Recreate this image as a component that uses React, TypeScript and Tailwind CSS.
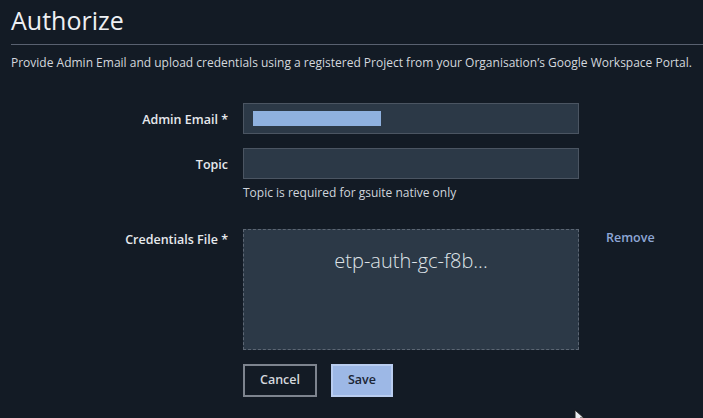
import React from "react"

function Field({ label, children }: { label: string; children: React.ReactNode }) {
  return (
    <div className="grid grid-cols-[228px_336px] gap-x-[15px]">
      <div className="pt-[8px] text-right text-[12.5px] font-semibold text-[#e6e9ed]">{label}</div>
      <div>{children}</div>
    </div>
  )
}

export default function App() {
  return (
    <div
      className="relative h-[418px] w-[703px] overflow-hidden bg-[#131b25] text-[#d7dce2]"
      style={{ fontFamily: '"Open Sans", "Noto Sans", sans-serif' }}
    >
      <div className="px-[11px] pt-[2px]">
        <h1 className="text-[25px] font-medium leading-[36px] text-[#eef0f3]">Authorize</h1>
      </div>
      <div className="ml-[11px] mt-[6px] h-px bg-[#596170]" />
      <p className="whitespace-nowrap px-[11px] pt-[9px] text-[12px] leading-[18px] text-[#d3d8de]">
        Provide Admin Email and upload credentials using a registered Project from your Organisation’s Google Workspace Portal.
      </p>

      <div className="mt-[31px] flex flex-col">
        <Field label="Admin Email *">
          <div className="flex h-[31px] items-center border border-[#4b5562] bg-[#2c3947] px-[9px]">
            <div className="h-[15px] w-[128px] bg-[#8fb1df]" />
          </div>
        </Field>
        <div className="h-[14px]" />
        <Field label="Topic">
          <div className="h-[31px] border border-[#4b5562] bg-[#2c3947]" />
          <div className="mt-[5px] text-[12px] leading-[18px] text-[#cfd5dc]">Topic is required for gsuite native only</div>
        </Field>
        <div className="h-[27px]" />
        <div className="grid grid-cols-[228px_336px_auto] gap-x-[15px]">
          <div className="pt-[2px] text-right text-[12.5px] font-semibold text-[#e6e9ed]">Credentials File *</div>
          <div className="flex h-[121px] justify-center border border-dashed border-[#5c6673] bg-[#2c3947] pt-[17px]">
            <span className="text-[20px] font-light leading-[28px] text-[#dfe3e8]">etp-auth-gc-f8b...</span>
          </div>
          <div className="pl-[12px] text-[12.5px] font-semibold text-[#8ea7d6]">Remove</div>
        </div>
        <div className="mt-[14px] flex gap-[14px] pl-[243px]">
          <button className="h-[33px] w-[74px] border-2 border-[#7d848e] text-[12.5px] font-semibold text-[#d4d8dd]">
            Cancel
          </button>
          <button className="h-[33px] w-[62px] border-2 border-[#b9cdf0] bg-[#9db8e6] text-[12.5px] font-semibold text-[#1b2535]">
            Save
          </button>
        </div>
      </div>

      <svg className="absolute left-[574px] top-[409px]" width="12" height="16" viewBox="0 0 12 16">
        <path d="M1 1 L1 13 L4 10 L6.5 15 L8.5 14 L6 9 L10 9 Z" fill="#e8eaee" stroke="#222" strokeWidth="1" />
      </svg>
    </div>
  )
}
